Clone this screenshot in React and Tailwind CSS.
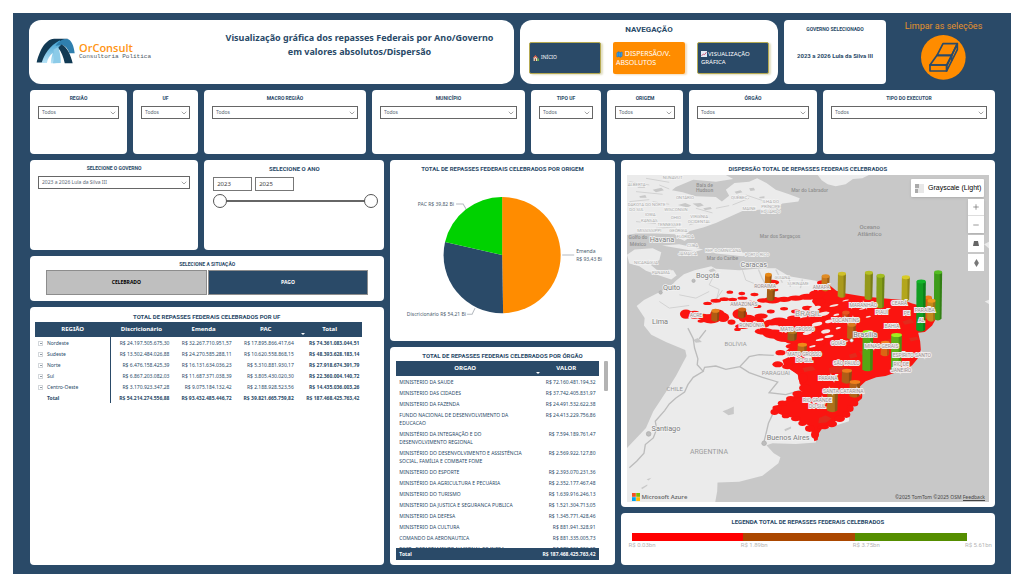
import { useState } from 'react'
import { ChevronDown, Plus, Minus, Map as MapIcon } from 'lucide-react'

const FILTERS = [
  { id: 'regiao', label: 'REGIÃO' },
  { id: 'uf', label: 'UF' },
  { id: 'macro', label: 'MACRO REGIÃO' },
  { id: 'municipio', label: 'MUNICÍPIO' },
  { id: 'tipo-uf', label: 'TIPO UF' },
  { id: 'origem', label: 'ORIGEM' },
  { id: 'orgao', label: 'ÓRGÃO' },
  { id: 'executor', label: 'TIPO DO EXECUTOR' },
]

const REGIONS = [
  ['Nordeste', '24.197.505.675,30', '32.267.710.951,57', '17.895.866.417,64', '74.361.083.044,51'],
  ['Sudeste', '13.502.484.026,88', '24.270.585.288,11', '10.620.558.868,15', '48.393.628.183,14'],
  ['Norte', '6.476.158.425,39', '16.131.634.036,23', '5.310.881.930,17', '27.918.674.391,79'],
  ['Sul', '6.867.203.082,03', '11.687.371.038,39', '3.805.430.020,30', '22.360.004.140,72'],
  ['Centro-Oeste', '3.170.923.347,28', '9.075.184.132,42', '2.188.928.523,56', '14.435.036.003,26'],
]

const AGENCIES = [
  ['MINISTERIO DA SAUDE', '72.160.481.194,32'],
  ['MINISTERIO DAS CIDADES', '37.742.405.831,97'],
  ['MINISTERIO DA FAZENDA', '24.491.532.622,38'],
  ['FUNDO NACIONAL DE DESENVOLVIMENTO DA EDUCACAO', '24.413.229.756,86'],
  ['MINISTÉRIO DA INTEGRAÇÃO E DO DESENVOLVIMENTO REGIONAL', '7.594.189.761,47'],
  ['MINISTÉRIO DO DESENVOLVIMENTO E ASSISTÊNCIA SOCIAL, FAMÍLIA E COMBATE FOME', '2.569.922.127,80'],
  ['MINISTERIO DO ESPORTE', '2.393.070.231,36'],
  ['MINISTÉRIO DA AGRICULTURA E PECUÁRIA', '2.352.177.467,48'],
  ['MINISTERIO DO TURISMO', '1.639.916.246,13'],
  ['MINISTERIO DA JUSTICA E SEGURANCA PUBLICA', '1.521.304.713,05'],
  ['MINISTERIO DA DEFESA', '1.345.771.428,46'],
  ['MINISTERIO DA CULTURA', '881.941.328,91'],
  ['COMANDO DA AERONAUTICA', '881.335.005,73'],
  ['DNIT - DEPARTAMENTO NACIONAL DE INFRA', '870.901.890,35'],
]

const LEGEND = [
  { label: 'R$ 0.03bn', color: 'bg-[#ff0000]' },
  { label: 'R$ 1.89bn', color: 'bg-[#ab4700]' },
  { label: 'R$ 3.75bn', color: 'bg-[#558e00]' },
]

export default function App() {
  return (
    <div className="bg-white p-[13px] font-['Noto_Sans',sans-serif] text-[#2a4a68]">
      <main className="bg-[#2a4a68] px-4 pt-[7px] pb-[9px] flex flex-col gap-1.5">
        <Header />
        <section className="ml-px grid grid-cols-[97fr_65fr_162fr_153fr_70fr_76fr_128fr_172fr] gap-1.5">
          {FILTERS.map((f) => (
            <Card key={f.id} className="px-2 pt-1 min-h-16">
              <Dropdown id={f.id} label={f.label} value="Todos" />
            </Card>
          ))}
        </section>
        <section className="ml-px grid grid-cols-[354fr_224fr_374fr] gap-1.5">
          <div className="flex flex-col gap-1.5">
            <div className="grid grid-cols-[168fr_180fr] gap-1.5">
              <Card className="px-2 pt-1 min-h-[90px]">
                <Dropdown id="governo" label="SELECIONE O GOVERNO" value="2023 a 2026 Lula da Silva III" />
              </Card>
              <YearCard />
            </div>
            <SituationCard />
            <RegionCard />
          </div>
          <div className="flex flex-col gap-1.5">
            <OriginCard />
            <AgencyCard />
          </div>
          <div className="flex flex-col gap-1.5">
            <MapCard />
            <LegendCard />
          </div>
        </section>
      </main>
    </div>
  )
}

function Card({ className = '', children }) {
  return <div className={`bg-white rounded-[4px] min-w-0 ${className}`}>{children}</div>
}

function CardTitle({ children }) {
  return <h2 className="font-['Roboto',sans-serif] text-[6px] leading-[8px] font-bold text-center whitespace-nowrap">{children}</h2>
}

function Dropdown({ id, label, value }) {
  return (
    <>
      <label htmlFor={id} className="block font-['Roboto',sans-serif] text-[5px] leading-[8px] font-bold text-center">{label}</label>
      <div className="relative mt-1">
        <select id={id} className="appearance-none block w-full h-[13px] border border-[#666] bg-white pl-[3px] text-[5px] text-[#5b6875]">
          <option>{value}</option>
        </select>
        <ChevronDown size={8} strokeWidth={2} className="absolute right-0.5 top-[3px] text-[#777] pointer-events-none" />
      </div>
    </>
  )
}

function Header() {
  return (
    <header className="grid grid-cols-[485fr_258fr_102fr_103fr] gap-1.5">
      <div className="bg-white rounded-[12px] flex items-start pl-[7px] min-h-16">
        <div className="flex items-center gap-1 pt-[18px]">
          <Logo />
          <div>
            <p className="font-['Open_Sans',sans-serif] font-semibold text-[11px] leading-[10px] text-[#ff9412]">OrConsult</p>
            <p className="font-['Liberation_Mono',monospace] text-[6px] leading-[7px] text-[#4d5966]">Consultoria Política</p>
          </div>
        </div>
        <h1 className="flex-1 pt-[11px] pl-[54px] text-[9px] leading-[14px] font-bold text-center whitespace-nowrap">
          Visualização gráfica dos repasses Federais por Ano/Governo
          <br />
          em valores absolutos/Dispersão
        </h1>
      </div>
      <nav className="bg-white rounded-[12px] px-[9px] pt-1">
        <p className="font-['Roboto',sans-serif] text-[8px] leading-[12px] font-bold text-center">NAVEGAÇÃO</p>
        <div className="grid grid-cols-3 gap-3 mt-[6px] text-white text-left">
          <button className="h-8 px-[3px] rounded-[2px] border border-[#b5a951] bg-[#2a4a68] shadow-[2px_1px_2px_#e2dfc4] text-[5px] flex items-center gap-[2px]">
            <HouseIcon /> INÍCIO
          </button>
          <button className="h-8 px-[3px] rounded-[2px] bg-[#ff8c00] shadow-[2px_1px_2px_#f3dcbc] text-[7px] leading-[9px] text-left">
            <GlobeMapIcon /> DISPERSÃO/V. ABSOLUTOS
          </button>
          <button className="h-8 px-[3px] rounded-[2px] border border-[#b5a951] bg-[#2a4a68] shadow-[2px_1px_2px_#e2dfc4] text-[6px] leading-[8px] text-left">
            <TrendIcon />VISUALIZAÇÃO GRÁFICA
          </button>
        </div>
      </nav>
      <Card className="pt-[5px] text-center font-['Roboto',sans-serif] font-bold">
        <p className="text-[5px] leading-[8px]">GOVERNO SELECIONADO</p>
        <p className="text-[6px] leading-[8px] mt-[19px]">2023 a 2026 Lula da Silva III</p>
      </Card>
      <button className="flex flex-col items-center font-['Roboto',sans-serif] text-[9px] leading-[12px] text-[#e5922c]">
        Limpar as seleções
        <EraserIcon />
      </button>
    </header>
  )
}

function YearCard() {
  const [from, setFrom] = useState(2023)
  const [to, setTo] = useState(2025)
  const box = 'w-[39px] h-[14px] border border-[#777] pl-[3px] text-[6px] text-[#444]'
  const range =
    'absolute inset-0 w-full h-[14px] appearance-none bg-transparent pointer-events-none [&::-webkit-slider-thumb]:appearance-none [&::-webkit-slider-thumb]:pointer-events-auto [&::-webkit-slider-thumb]:size-[14px] [&::-webkit-slider-thumb]:rounded-full [&::-webkit-slider-thumb]:border [&::-webkit-slider-thumb]:border-[#555] [&::-webkit-slider-thumb]:bg-white'

  return (
    <Card className="px-[9px] pt-[5px]">
      <CardTitle>SELECIONE O ANO</CardTitle>
      <div className="flex gap-[3px] mt-1">
        <input aria-label="Ano inicial" className={box} value={from} onChange={(e) => setFrom(Number(e.target.value))} />
        <input aria-label="Ano final" className={box} value={to} onChange={(e) => setTo(Number(e.target.value))} />
      </div>
      <div className="relative h-[14px] mt-[3px] -mr-[3px] flex items-center">
        <div className="mx-1.5 h-[2px] flex-1 bg-[#666]" />
        <input type="range" aria-label="De" min={2023} max={2025} value={from} onChange={(e) => setFrom(Number(e.target.value))} className={range} />
        <input type="range" aria-label="Até" min={2023} max={2025} value={to} onChange={(e) => setTo(Number(e.target.value))} className={range} />
      </div>
    </Card>
  )
}

function SituationCard() {
  const [selected, setSelected] = useState('CELEBRADO')
  return (
    <Card className="px-4 pt-1 pb-[6px]">
      <p className="font-['Roboto',sans-serif] text-[5px] leading-[8px] font-bold text-center">SELECIONE A SITUAÇÃO</p>
      <div className="grid grid-cols-2 gap-px mt-[2px]">
        {['CELEBRADO', 'PAGO'].map((s) => (
          <button
            key={s}
            aria-pressed={s === selected}
            onClick={() => setSelected(s)}
            className={`h-[25px] border border-[#8d8d8d] text-[5px] font-bold ${s === selected ? 'bg-[#bfbfbf] text-black' : 'bg-[#2a4a68] text-white'}`}
          >
            {s}
          </button>
        ))}
      </div>
    </Card>
  )
}

function RegionCard() {
  return (
    <Card className="flex-1 pl-[5px] pr-[22px] pt-[6px]">
      <div className="pl-4"><CardTitle>TOTAL DE REPASSES FEDERAIS CELEBRADOS POR UF</CardTitle></div>
      <table className="w-full table-fixed mt-px text-[5px] leading-[8px] text-right whitespace-nowrap">
        <colgroup>
          <col className="w-[23%]" />
          <col className="w-[19%]" />
          <col className="w-[19%]" />
          <col className="w-[19%]" />
          <col className="w-[20%]" />
        </colgroup>
        <thead className="bg-[#2a4a68] text-white text-center text-[6px]">
          <tr>
            {['REGIÃO', 'Discricionário', 'Emenda', 'PAC', 'Total'].map((h) => (
              <th key={h} className="relative h-[15px] pb-[2px] font-bold">
                {h}
                {h === 'Total' && <SortArrow className="absolute left-1 bottom-[2px]" />}
              </th>
            ))}
          </tr>
        </thead>
        <tbody>
          {REGIONS.map(([name, ...values]) => (
            <tr key={name}>
              <th className="h-[11px] pl-[3px] font-normal text-left border-r border-[#2a4a68]">
                <button aria-label={`Expandir ${name}`} className="inline-flex size-[5px] border border-[#d3d7db] mr-1 items-center justify-center align-middle">
                  <span className="h-px w-[2px] bg-[#8d98a3]" />
                </button>
                {name}
              </th>
              {values.map((v, i) => (
                <td key={v} className={`pr-[3px] ${i === 3 ? 'font-bold' : ''}`}>R$ {v}</td>
              ))}
            </tr>
          ))}
        </tbody>
        <tfoot>
          <tr className="font-bold">
            <th className="h-[11px] pl-3 text-left border-r border-[#2a4a68]">Total</th>
            <td className="pr-[3px]">R$ 54.214.274.556,88</td>
            <td className="pr-[3px]">R$ 93.432.485.446,72</td>
            <td className="pr-[3px]">R$ 39.821.665.759,82</td>
            <td className="pr-[3px]">R$ 187.468.425.763,42</td>
          </tr>
        </tfoot>
      </table>
    </Card>
  )
}

function OriginCard() {
  return (
    <Card className="pt-[5px] pb-[3px]">
      <CardTitle>TOTAL DE REPASSES FEDERAIS CELEBRADOS POR ORIGEM</CardTitle>
      <svg viewBox="0 0 224 165" className="block w-full" fontSize="5" fill="#4b5c6e">
        <path d="M112 82V24A58 58 0 0 1 113 140Z" fill="#ff8c00" />
        <path d="M112 82L113 140A58 58 0 0 1 55 69Z" fill="#2a4a68" />
        <path d="M112 82L55 69A58 58 0 0 1 112 24Z" fill="#00d200" />
        <path d="M66 31h7l3 5M77 141h5l3-6M172 82h12" fill="none" stroke="#b5bac0" strokeWidth="1" />
        <text x="64" y="33" textAnchor="end">PAC R$ 39,82 Bi</text>
        <text x="76" y="143" textAnchor="end">Discricionário R$ 54,21 Bi</text>
        <text x="186" y="80">Emenda</text>
        <text x="186" y="88">R$ 93,43 Bi</text>
      </svg>
    </Card>
  )
}

function AgencyCard() {
  return (
    <Card className="flex-1 px-[6px] pt-[5px] pb-[5px]">
      <CardTitle>TOTAL DE REPASSES FEDERAIS CELEBRADOS POR ÓRGÃO</CardTitle>
      <div className="flex gap-[5px] mt-px">
        <div className="flex-1 min-w-0 text-[5px] leading-[8px]">
          <div className="h-[187px] overflow-hidden">
            <table className="w-full table-fixed">
              <colgroup>
                <col className="w-[68%]" />
                <col className="w-[32%]" />
              </colgroup>
              <thead className="bg-[#2a4a68] text-white text-center text-[6px]">
                <tr>
                  <th className="relative h-[15px] pb-[2px]">
                    ORGAO
                    <SortArrow className="absolute -right-[6px] bottom-[2px]" />
                  </th>
                  <th className="h-[15px] pb-[2px]">VALOR</th>
                </tr>
              </thead>
              <tbody>
                {AGENCIES.map(([name, value]) => (
                  <tr key={name} className="align-top">
                    <td className="pt-[2px] pb-px pl-[3px] pr-3">{name}</td>
                    <td className="pt-[2px] pb-px pr-[3px] text-right whitespace-nowrap">R$ {value}</td>
                  </tr>
                ))}
              </tbody>
            </table>
          </div>
          <div className="h-3 px-[3px] bg-[#2a4a68] text-white font-bold flex items-center justify-between">
            <span>Total</span>
            <span>R$ 187.468.425.763,42</span>
          </div>
        </div>
        <div className="w-1 h-[30px] bg-[#b3b3b3] rounded-[1px] mr-px" />
      </div>
    </Card>
  )
}

function LegendCard() {
  return (
    <Card className="flex-1 pt-[5px]">
      <CardTitle>LEGENDA TOTAL DE REPASSES FEDERAIS CELEBRADOS</CardTitle>
      <div className="grid grid-cols-3 h-2 mt-[7px] ml-[11px] mr-7">
        {LEGEND.map((l) => (
          <div key={l.label} className={l.color} />
        ))}
      </div>
      <div className="grid grid-cols-[1fr_1fr_1fr_26px] ml-2 mr-1 font-['Roboto',sans-serif] text-[6px] leading-[7px] text-[#b5b5b5] whitespace-nowrap">
        {LEGEND.map((l) => (
          <span key={l.label}>{l.label}</span>
        ))}
        <span>R$ 5.61bn</span>
      </div>
    </Card>
  )
}

// Scattered municipalities outside the solid area: cx, cy, rx, ry
const SPOTS = [
  [342, 412, 10, 5], [378, 416, 10, 5], [416, 419, 12, 5], [275, 446, 13, 5], [300, 438, 16, 6], [325, 433, 14, 6],
  [350, 434, 14, 5], [380, 430, 15, 5], [404, 444, 14, 6], [442, 437, 18, 7], [470, 436, 26, 10], [505, 434, 22, 8],
  [540, 430, 24, 8], [575, 426, 26, 9], [604, 418, 24, 12], [470, 383, 20, 8], [476, 405, 12, 5], [210, 478, 18, 14],
  [236, 480, 20, 12], [262, 486, 18, 9], [285, 492, 30, 14], [305, 478, 22, 14], [322, 488, 18, 14], [347, 502, 12, 8],
  [372, 478, 22, 15], [395, 492, 26, 12], [418, 500, 28, 14], [436, 484, 20, 8], [380, 515, 22, 8], [445, 510, 16, 9],
  [465, 470, 12, 6], [505, 462, 12, 5], [540, 470, 14, 6], [575, 460, 16, 7], [468, 503, 22, 9], [490, 500, 26, 12],
  [520, 508, 34, 16], [556, 505, 28, 14], [445, 530, 28, 10], [475, 538, 34, 14], [510, 548, 36, 14], [494, 594, 15, 8],
  [486, 629, 16, 9], [365, 524, 10, 5], [255, 499, 10, 5], [425, 455, 12, 5], [534, 490, 20, 8], [590, 480, 20, 10],
  [575, 505, 34, 18], [560, 530, 46, 18], [600, 525, 40, 20], [545, 556, 40, 14], [590, 560, 40, 20], [530, 575, 20, 8],
  [610, 440, 20, 10], [630, 460, 24, 16], [545, 640, 22, 12], [515, 636, 16, 8], [562, 670, 14, 14], [568, 700, 18, 12],
  [548, 718, 18, 10], [525, 732, 14, 8], [500, 746, 14, 8], [484, 760, 14, 8], [476, 772, 12, 9], [510, 784, 12, 7],
  [540, 792, 14, 8], [560, 806, 12, 8], [582, 822, 14, 10], [598, 840, 12, 12], [622, 818, 18, 6], [648, 808, 16, 10],
  [672, 792, 16, 10], [692, 780, 12, 10], [704, 762, 10, 10], [716, 746, 12, 10], [730, 724, 10, 12], [620, 384, 16, 8],
]

// Unserved gaps drawn over the solid area
const GAPS = [
  [620, 478, 22, 6], [604, 508, 16, 6], [598, 460, 18, 6], [640, 500, 12, 5], [655, 452, 14, 3], [630, 530, 14, 6],
  [662, 480, 9, 3], [690, 437, 10, 2], [712, 452, 12, 2], [668, 520, 8, 3], [740, 462, 10, 2], [612, 555, 12, 3],
  [575, 535, 14, 5], [640, 545, 14, 4], [720, 500, 8, 2], [758, 486, 8, 2], [690, 560, 9, 2], [590, 575, 10, 3],
]

// cx, top, bottom, width, body colour, cap colour
const COLUMNS = [
  [458, 360, 388, 20, '#c66d10', '#e88a18'], [466, 402, 434, 24, '#a35e16', '#b86c1a'],
  [299, 468, 496, 24, '#b05b12', '#e8821c'], [379, 464, 486, 24, '#a94e10', '#d06416'],
  [630, 364, 405, 24, '#c4761a', '#e08c24'], [679, 357, 424, 24, '#aa9a1c', '#cfc02a'],
  [760, 354, 431, 24, '#94991a', '#b5c024'], [795, 363, 456, 24, '#84a018', '#a2bd20'],
  [871, 367, 435, 24, '#b3a61c', '#d8cb28'], [968, 352, 492, 24, '#3d9c1a', '#54bd22'],
  [938, 428, 488, 22, '#db5d13', '#f07a18'], [948, 438, 496, 24, '#c28a1c', '#f09a1c'],
  [917, 380, 526, 28, '#119d22', '#12b52a'], [691, 473, 500, 22, '#d34818', '#ea5420'],
  [708, 510, 550, 26, '#b96616', '#d87c20'], [757, 532, 645, 32, '#55a814', '#92f01c'],
  [843, 541, 650, 32, '#61b018', '#a2ec20'], [809, 564, 600, 26, '#dc6514', '#f08020'],
  [694, 648, 682, 30, '#b05c16', '#ee7c1c'], [718, 682, 724, 32, '#b36218', '#f0801c'],
  [651, 705, 768, 32, '#ad711c', '#eb9a1e'], [530, 532, 554, 28, '#96601c', '#b8761e'],
  [560, 570, 592, 28, '#b8691a', '#f08a18'],
]

const CITIES = [
  [101, 262, 'Havana'], [374, 336, 'Caracas'], [240, 371, 'Bogotá'], [141, 406, 'Quito'], [108, 509, 'Lima'],
  [107, 828, 'Santiago'], [453, 856, 'Buenos Aires'], [713, 547, 'Brasília'],
]

const STATES = [
  [448, 401, 'RORAIMA'], [240, 487, 'ACRE'], [384, 455, 'AMAZONAS'], [408, 516, 'RONDÔNIA'], [545, 529, 'MATO GROSSO'],
  [617, 404, 'AMAPÁ'], [743, 457, 'MARANHÃO'], [798, 477, 'PIAUÍ'], [851, 450, 'CEARÁ'], [928, 472, 'PARAÍBA'],
  [874, 482, 'PE'], [918, 503, 'AL'], [829, 519, 'BAHIA'], [690, 502, 'TOCANTINS'], [668, 571, 'GOIÁS'],
  [798, 580, 'MINAS GERAIS'], [889, 607, 'ESPÍRITO SANTO'], [857, 635, 'RIO DE'], [857, 653, 'JANEIRO'],
  [693, 631, 'SÃO PAULO'], [637, 677, 'PARANÁ'], [683, 715, 'SANTA CATARINA'], [605, 741, 'RIO GRANDE'],
  [605, 759, 'DO SUL'], [566, 603, 'MATO GROSSO'], [566, 621, 'DO SUL'],
]

const SMALL_PLACES = [
  [170, 72, 'NUNAVUT'], [62, 92, 'ALBERTA'], [207, 131, 'ONTÁRIO'], [370, 132, 'QUÉBEC'], [92, 152, 'DAKOTA DO NORTE'],
  [62, 168, 'DO SUL'], [103, 184, 'IOWA'], [180, 167, 'WISCONSIN'], [180, 192, 'OHIO'], [100, 201, 'KANSAS'], [250, 188, 'VIRGÍNIA'],
  [250, 204, 'OCIDENTAL'], [160, 214, 'TENNESSEE'], [100, 231, 'MISSISSIPPI'], [187, 231, 'GEÓRGIA'], [465, 145, 'ILHA DO'],
  [465, 160, 'PRÍNCIPE'], [465, 175, 'EDUARDO'], [400, 165, 'MAINE'], [208, 248, 'FLÓRIDA'], [230, 276, 'CUBA'], [215, 299, 'JAMAICA'],
  [322, 292, 'REP. DOMINICANA'], [424, 303, 'PORTO RICO'], [90, 326, 'NICARÁGUA'], [135, 359, 'PANAMÁ'], [500, 372, 'GUIANA'], [547, 390, 'SURINAME'],
]

function MapCard() {
  return (
    <Card className="px-[6px] pt-[5px] pb-[5px]">
      <CardTitle>DISPERSÃO TOTAL DE REPASSES FEDERAIS CELEBRADOS</CardTitle>
      <div className="relative mt-[2px]">
        <DispersionMap />
        <div className="absolute right-[5px] top-1 flex flex-col items-end gap-[2px]">
          <button className="h-[18px] w-[73px] bg-white rounded-[1px] shadow flex items-center gap-1 pl-1 font-['Liberation_Sans',sans-serif] text-[7px] text-black whitespace-nowrap">
            <svg viewBox="0 0 9 9" className="size-[9px] shrink-0">
              <path d="M0 0h9v9H0Z" fill="#e8e8e8" />
              <path d="M0 0h4v4H0ZM0 5h3v4H0Z" fill="#aaa" />
            </svg>
            Grayscale (Light)
          </button>
          <div className="w-4 bg-white text-[#666] shadow-sm">
            <button aria-label="Aproximar" className="flex h-[17px] w-full items-center justify-center border-b border-[#ddd]"><Plus size={8} /></button>
            <button aria-label="Afastar" className="flex h-[17px] w-full items-center justify-center"><Minus size={8} /></button>
          </div>
          <button aria-label="Inclinação" className="flex w-4 h-[17px] bg-white items-center justify-center">
            <svg viewBox="0 0 6 5" className="w-[6px] h-[5px]"><path d="M1 0h4l1 5H0Z" fill="#666" /></svg>
          </button>
          <button aria-label="Rotação" className="flex w-4 h-[17px] bg-white items-center justify-center">
            <svg viewBox="0 0 6 10" className="w-[5px] h-2"><path d="M3 0L6 5 3 10 0 5Z" fill="#777" /></svg>
          </button>
        </div>
        <div className="absolute left-[5px] bottom-px flex items-center gap-[2px] font-['Open_Sans',sans-serif] font-semibold text-[6px] leading-[8px] text-[#666]">
          <svg viewBox="0 0 8 8" className="size-2">
            <path d="M0 0h3.800v3.800H0Z" fill="#f25022" />
            <path d="M4.200 0H8v3.800H4.200Z" fill="#7fba00" />
            <path d="M0 4.200h3.800V8H0Z" fill="#00a4ef" />
            <path d="M4.200 4.200H8V8H4.200Z" fill="#ffb900" />
          </svg>
          Microsoft Azure
        </div>
        <p className="absolute right-1 bottom-px text-[5px] leading-[8px] text-[#444]">
          ©2025 TomTom ©2025 OSM <a href="#feedback" className="border-b border-[#444]">Feedback</a>
        </p>
      </div>
    </Card>
  )
}

function DispersionMap() {
  return (
    <svg viewBox="33 60 1089 984" className="block w-full font-['Roboto',sans-serif]">
      <path d="M33 60h1089v984H33Z" fill="#c8c8c8" />
      <g fill="#ebebeb">
        <path d="M33 60H330L352 72 300 80 232 74 180 96 168 106 200 112 240 124 300 126 318 140 340 122 330 104 356 84 400 80 424 70 452 84 480 104 520 118 552 130 548 140 500 146 484 156 440 164 380 168 340 186 300 204 262 218 222 228 206 240 214 252 206 258 190 250 176 238 120 236 60 236 33 240Z" />
        <path d="M606 60H760L740 70 712 72 690 88 660 94 636 88 618 76Z" />
        <path d="M138 272L190 268 262 284 240 290 200 282ZM276 284L340 282 404 298 380 304 300 296ZM200 290h34v8h-34Z" />
        <path d="M33 300L56 284 110 280 136 292 130 316 104 330 124 346 172 346 182 362 166 374 130 362 90 348 70 334 40 326Z" />
        <path d="M180 378L204 358 236 346 286 334 300 342 370 346 440 340 480 340 520 364 600 378 640 400 700 430V800L605 830 600 864 540 868 470 866 452 872 474 896 494 908 488 926 440 964 370 982 305 984 304 1010 298 1044H33V880L90 820 112 770 150 712 180 664 212 604 208 586 150 562 106 540 84 512 86 490 62 454 84 436 130 412 164 394Z" />
        <path d="M1108 440l14-6v14ZM1106 268l16-8v22Z" />
      </g>
      <g fill="#c8c8c8">
        <path d="M60 90h22l6 8H66ZM110 104l26-6 8 8-24 6ZM70 124l18-4 4 8H72ZM186 150l22-6 18 8-12 6ZM230 146l24-2 10 8-18 4ZM262 160l22-4 4 6-20 4ZM356 110l18-4 6 6-18 4ZM400 100l14-2 4 8-14 2ZM430 126l16-2v6h-14ZM320 770l16-6 18-8v22l-16 4ZM506 824l20-8v6l-18 8ZM232 556l14-6 12 12-18 2ZM278 346l14-6 8 8-16 4ZM76 1000l18-10v4l-16 10ZM92 974l14-4-8 8Z" />
      </g>
      <g fill="none" stroke="#d2d2d2" strokeWidth="3">
        <path d="M40 80l60 10M90 70l70 12M60 110l80 8M40 140l60-6M110 140l50 8M130 90l30 12M260 94l30-8M240 160l50 14M300 160l40-8M350 150l50-20M390 120l60 20M60 200l60 6M120 220l60-4M220 210l40-12" />
        <path d="M300 350l-20 40 30 14-8 30M380 346l10 30 40 16M190 420l50 10 40-20M130 440l30 20 60-8M290 450l30-44" />
      </g>
      <g fill="none" stroke="#bcbcbc" strokeWidth="4">
        <path d="M216 520L232 552 236 580 246 612 244 630 262 650 232 668 216 690 206 712 180 730 160 748 146 768 118 800 122 824 112 850 88 870 84 896 62 920 40 940" />
        <path d="M262 650L266 638 300 634 330 644 372 636 400 606 430 600 474 602M372 636L400 654 440 668 486 682 460 714 510 720 560 706M470 780L458 806 450 840 444 864M270 526L250 552" />
        <path d="M428 344l10 24 16 30M480 344l20 40M520 366l4 30M560 374l-6 26" stroke="#d2d2d2" />
      </g>
      <g fill="#aaa" fontSize="13" textAnchor="middle">
        {SMALL_PLACES.map(([x, y, t]) => (
          <text key={`${t}${x}${y}`} x={x} y={y} stroke="#f4f4f4" strokeWidth="4" paintOrder="stroke">{t}</text>
        ))}
      </g>

      <g fill="#fb1410">
        <path d="M596 400L618 382 640 390 662 408 690 416 740 424 800 430 862 436 890 446 950 462 966 484 950 512 928 532 908 534 914 560 916 586 906 612 890 632 866 648 838 654 810 664 782 668 750 680 732 696 732 738 712 752 700 774 682 792 662 798 644 814 622 818 608 838 606 856 596 860 590 836 578 812 556 802 540 790 510 786 486 776 468 770 476 758 506 740 540 722 570 704 552 688 546 660 526 646 506 634 500 616 518 608 510 590 530 574 520 556 500 544 530 520 570 520 590 500 580 480 610 470 590 440Z" />
        {SPOTS.map(([cx, cy, rx, ry], i) => (
          <ellipse key={i} cx={cx} cy={cy} rx={rx} ry={ry} />
        ))}
      </g>
      <g fill="#e32a1c">
        <path d="M640 640l34-8 22 10-20 12-34 2ZM790 560l40-8 12 14-30 10ZM610 790l20-8 18 10-16 12-24 2ZM880 550l24-4 6 8-24 6ZM730 590l30-6 8 12-30 6ZM560 640l30-6 10 12-34 6ZM860 500l26-8 10 12-28 6ZM700 600l20-6 6 12-22 6Z" />
      </g>
      <g fill="#f3e6e4">
        {GAPS.map(([cx, cy, rx, ry], i) => (
          <ellipse key={i} cx={cx} cy={cy} rx={rx} ry={ry} transform={`rotate(-12 ${cx} ${cy})`} />
        ))}
      </g>

      {COLUMNS.map(([x, top, bottom, w, body, cap]) => (
        <g key={`${x}${top}`}>
          <path d={`M${x - w / 2} ${top}L${x - w / 2 - 1} ${bottom}Q${x} ${bottom + 10} ${x + w / 2 - 2} ${bottom}L${x + w / 2} ${top}Z`} fill={body} />
          <path d={`M${x + w / 5} ${top}V${bottom + 3}L${x + w / 2 - 2} ${bottom}L${x + w / 2} ${top}Z`} fill="#000" opacity="0.18" />
          <ellipse cx={x} cy={top} rx={w / 2} ry="6" fill={cap} />
        </g>
      ))}

      <g fill="#9a8f8f" fontSize="15" textAnchor="middle">
        {STATES.map(([x, y, t]) => (
          <text key={`${t}${x}`} x={x} y={y} stroke="#f1ecec" strokeWidth="6" paintOrder="stroke">{t}</text>
        ))}
      </g>
      <g fill="#9c9c9c" fontSize="18">
        <text x="326" y="574">BOLÍVIA</text>
        <text x="438" y="661">PARAGUAI</text>
        <text x="152" y="709">CHILE</text>
        <text x="222" y="898" fontSize="21">ARGENTINA</text>
        <text x="538" y="484" fontSize="24" stroke="#f1ecec" strokeWidth="5" paintOrder="stroke">BRASIL</text>
      </g>
      <g fill="#bdbdbd" stroke="#aaa" strokeWidth="2">
        <circle cx="98" cy="838" r="7" />
        <circle cx="445" cy="866" r="7" />
        <circle cx="233" cy="378" r="5" />
        <circle cx="134" cy="413" r="5" />
        <circle cx="708" cy="557" r="5" fill="#fff" />
      </g>
      <g fill="#7d7d7d" fontSize="22">
        {CITIES.map(([x, y, t]) => (
          <text key={t} x={x} y={y} stroke="#f2f2f2" strokeWidth="5" paintOrder="stroke">{t}</text>
        ))}
      </g>
      <g fill="#8f8f8f" fontSize="15" fontWeight="500" textAnchor="middle">
        <text x="266" y="95">Baía de</text>
        <text x="266" y="111">Hudson</text>
        <text x="582" y="112">Mar do Labrador</text>
        <text x="493" y="249">Mar dos Sargaços</text>
        <text x="66" y="252">Golfo do</text>
        <text x="66" y="272">México</text>
        <text x="320" y="316">Mar do Caribe</text>
        <text x="762" y="223" fontSize="18">Oceano</text>
        <text x="762" y="243" fontSize="18">Atlântico</text>
      </g>
    </svg>
  )
}

function SortArrow({ className }) {
  return (
    <svg viewBox="0 0 4 2" className={`w-1 h-[2px] ${className}`}>
      <path d="M0 0h4L2 2Z" fill="#fff" />
    </svg>
  )
}

function Logo() {
  return (
    <svg viewBox="105 115 118 78" className="w-[39px] h-[26px]">
      <defs>
        <linearGradient id="ice" x1="0" y1="0" x2="0" y2="1">
          <stop offset="0" stopColor="#3fa0d0" />
          <stop offset="1" stopColor="#b9e4f7" />
        </linearGradient>
      </defs>
      <path d="M107 189C114 160 130 119 160 117L202 117C172 124 148 142 128 189Z" fill="#123a54" />
      <path d="M122 190C130 164 146 138 176 122L190 130C172 148 166 168 164 191L150 191C150 180 152 172 156 160C146 168 140 178 138 190Z" fill="url(#ice)" />
      <path d="M164 138C176 122 188 117 200 118C212 120 220 140 222 161L206 161C202 148 194 138 182 136Z" fill="#2f7fae" />
      <path d="M182 134C198 140 210 164 216 191L192 191C188 172 182 156 172 144Z" fill="#123a54" />
      <path d="M158 150L172 142C178 158 180 174 180 190L156 191C160 178 160 164 158 150Z" fill="#8ccbe8" />
    </svg>
  )
}

function EraserIcon() {
  return (
    <svg viewBox="0 0 135 135" className="size-[45px] mt-[3px]">
      <circle cx="67" cy="67" r="67" fill="#ff8c00" />
      <g fill="none" stroke="#2a4a68" strokeWidth="5" strokeLinejoin="round">
        <path d="M66 26H109L92 61H48Z" />
        <path d="M48 61H92L79 90H27Z" />
        <path d="M27 90H77V108H27Z" />
        <path d="M109 26V44L77 108V90L92 61Z" />
        <path d="M92 61V78" />
      </g>
    </svg>
  )
}

function HouseIcon() {
  return (
    <svg viewBox="0 0 10 10" className="size-[6px]">
      <path d="M1 4L4 1l3 3v6H1Z" fill="#e8dcd0" />
      <path d="M0 5L4 0l4 5H6L4 3 2 5Z" fill="#d4553a" />
      <path d="M3 6h2v4H3Z" fill="#8a4b2a" />
      <path d="M7 6h3v4H7Z" fill="#6fae4e" />
    </svg>
  )
}

function GlobeMapIcon() {
  return <MapIcon size={7} fill="#3f9fe0" stroke="#2476b8" strokeWidth={2} className="inline-block" />
}

function TrendIcon() {
  return (
    <svg viewBox="0 0 10 10" className="inline-block size-[6px] mr-px">
      <path d="M0 0h10v10H0Z" fill="#e6ecf5" />
      <path d="M1 8l3-3 2 1 3-4" fill="none" stroke="#c0476a" strokeWidth="1.500" />
    </svg>
  )
}
